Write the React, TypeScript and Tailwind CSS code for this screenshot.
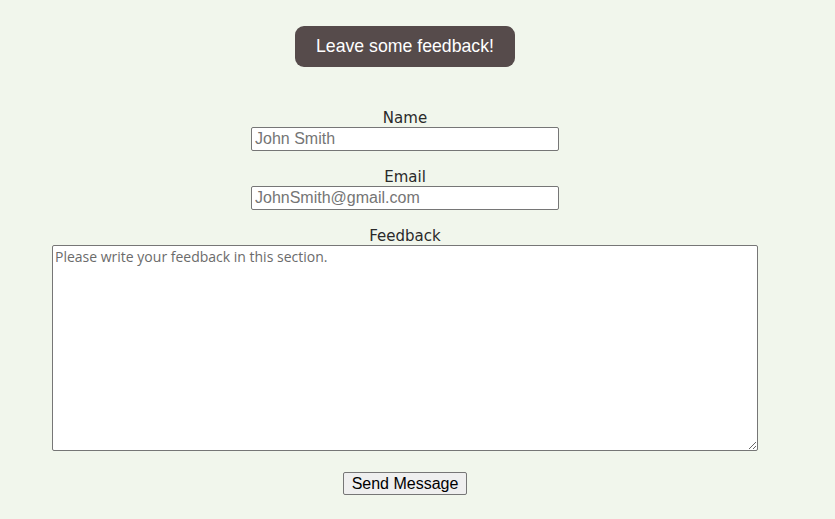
import React from 'react';

const labelFont = { fontFamily: '"DejaVu Sans", "Open Sans", sans-serif' };

const App: React.FC = () => {
  return (
    <div className="min-h-[519px] w-full bg-[#f1f6ec]">
      <div className="w-[810px] flex flex-col items-center pt-[26px]">
        <h1 className="w-[220px] h-[41px] flex items-center justify-center rounded-[9px] bg-[#564b4b] text-white text-[17.7px] font-['Liberation_Sans',Arial,sans-serif]">
          Leave some feedback!
        </h1>

        <form className="flex flex-col items-center mt-[41px] w-full">
          <label className="pt-px text-[15px] leading-[18px] text-[#2a2a2a]" style={labelFont}>
            Name
          </label>
          <input
            type="text"
            placeholder="John Smith"
            className="w-[308px] h-[24px] border border-[#767676] rounded-[2px] bg-white px-[3px] text-[16px] placeholder:text-[#757575] font-['Liberation_Sans',Arial,sans-serif]"
          />

          <label className="mt-[16px] pt-px text-[15px] leading-[18px] text-[#2a2a2a]" style={labelFont}>
            Email
          </label>
          <input
            type="email"
            placeholder="JohnSmith@gmail.com"
            className="w-[308px] h-[24px] border border-[#767676] rounded-[2px] bg-white px-[3px] text-[16px] placeholder:text-[#757575] font-['Liberation_Sans',Arial,sans-serif]"
          />

          <label className="mt-[16px] pt-px text-[15px] leading-[18px] text-[#2a2a2a]" style={labelFont}>
            Feedback
          </label>
          <textarea
            placeholder="Please write your feedback in this section."
            className="w-[706px] h-[206px] border border-[#767676] rounded-[2px] bg-white px-[2px] py-[2px] text-[14px] leading-[18px] placeholder:text-[#6b6b6b] font-['Open_Sans',sans-serif]"
          />

          <button
            type="button"
            className="mt-[21px] w-[124px] h-[23px] border border-[#767676] rounded-[2px] bg-[#efefef] text-[16px] text-black leading-none font-['Liberation_Sans',Arial,sans-serif]"
          >
            Send Message
          </button>
        </form>
      </div>
    </div>
  );
};

export default App;
